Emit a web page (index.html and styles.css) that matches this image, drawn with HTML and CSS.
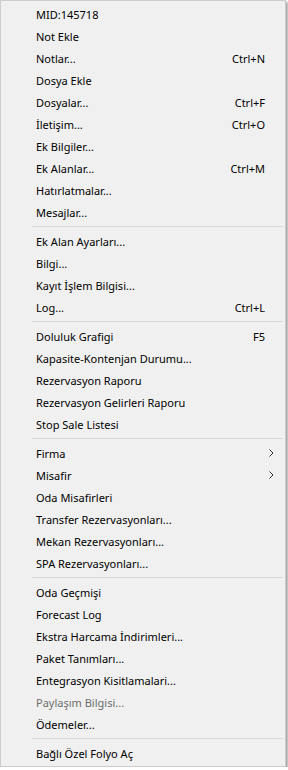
FILE: index.html
```html
<!DOCTYPE html>
<html lang="tr">
<head>
    <meta charset="UTF-8">
    <title>Menü</title>
    <link rel="stylesheet" href="styles.css">
</head>
<body>
    <div class="menu">
        <div class="item">MID:145718</div>
        <div class="item">Not Ekle</div>
        <div class="item">Notlar...<span class="key">Ctrl+N</span></div>
        <div class="item">Dosya Ekle</div>
        <div class="item">Dosyalar...<span class="key">Ctrl+F</span></div>
        <div class="item">İletişim...<span class="key">Ctrl+O</span></div>
        <div class="item">Ek Bilgiler...</div>
        <div class="item">Ek Alanlar...<span class="key">Ctrl+M</span></div>
        <div class="item">Hatırlatmalar...</div>
        <div class="item">Mesajlar...</div>
        <div class="sep"></div>
        <div class="item">Ek Alan Ayarları...</div>
        <div class="item">Bilgi...</div>
        <div class="item">Kayıt İşlem Bilgisi...</div>
        <div class="item">Log...<span class="key">Ctrl+L</span></div>
        <div class="sep"></div>
        <div class="item">Doluluk Grafigi<span class="key">F5</span></div>
        <div class="item">Kapasite-Kontenjan Durumu...</div>
        <div class="item">Rezervasyon Raporu</div>
        <div class="item">Rezervasyon Gelirleri Raporu</div>
        <div class="item">Stop Sale Listesi</div>
        <div class="sep"></div>
        <div class="item sub">Firma
            <svg class="arrow" width="5" height="8" viewBox="0 0 5 8"><polyline points="0.5,0.5 4,4 0.5,7.5" fill="none" stroke="#333" stroke-width="1"/></svg>
        </div>
        <div class="item sub">Misafir
            <svg class="arrow" width="5" height="8" viewBox="0 0 5 8"><polyline points="0.5,0.5 4,4 0.5,7.5" fill="none" stroke="#333" stroke-width="1"/></svg>
        </div>
        <div class="item">Oda Misafirleri</div>
        <div class="item">Transfer Rezervasyonları...</div>
        <div class="item">Mekan Rezervasyonları...</div>
        <div class="item">SPA Rezervasyonları...</div>
        <div class="sep"></div>
        <div class="item">Oda Geçmişi</div>
        <div class="item">Forecast Log</div>
        <div class="item">Ekstra Harcama İndirimleri...</div>
        <div class="item">Paket Tanımları...</div>
        <div class="item">Entegrasyon Kisitlamalari...</div>
        <div class="item disabled">Paylaşım Bilgisi...</div>
        <div class="item">Ödemeler...</div>
        <div class="sep"></div>
        <div class="item">Bağlı Özel Folyo Aç</div>
    </div>
</body>
</html>
```

FILE: styles.css
```css
body {
    margin: 0;
    background-color: #fff;
    font-family: "Noto Sans", "Open Sans", Arial, sans-serif;
    font-size: 11px;
}
.menu {
    width: 284px;
    padding: 2px 0;
    background-color: #f0f0f0;
    border: 1px solid #ccc;
    box-shadow: 2px 2px 2px rgba(0,0,0,0.35);
}
.item {
    display: flex;
    align-items: center;
    height: 22px;
    padding: 0 20px 0 35px;
    color: #000;
    white-space: nowrap;
}
.key {
    margin-left: auto;
}
.arrow {
    margin-left: auto;
    margin-right: -9px;
}
.disabled {
    color: #6d6d6d;
}
.sep {
    height: 1px;
    margin: 3px 2px 3px 31px;
    background-color: #d7d7d7;
}
```
